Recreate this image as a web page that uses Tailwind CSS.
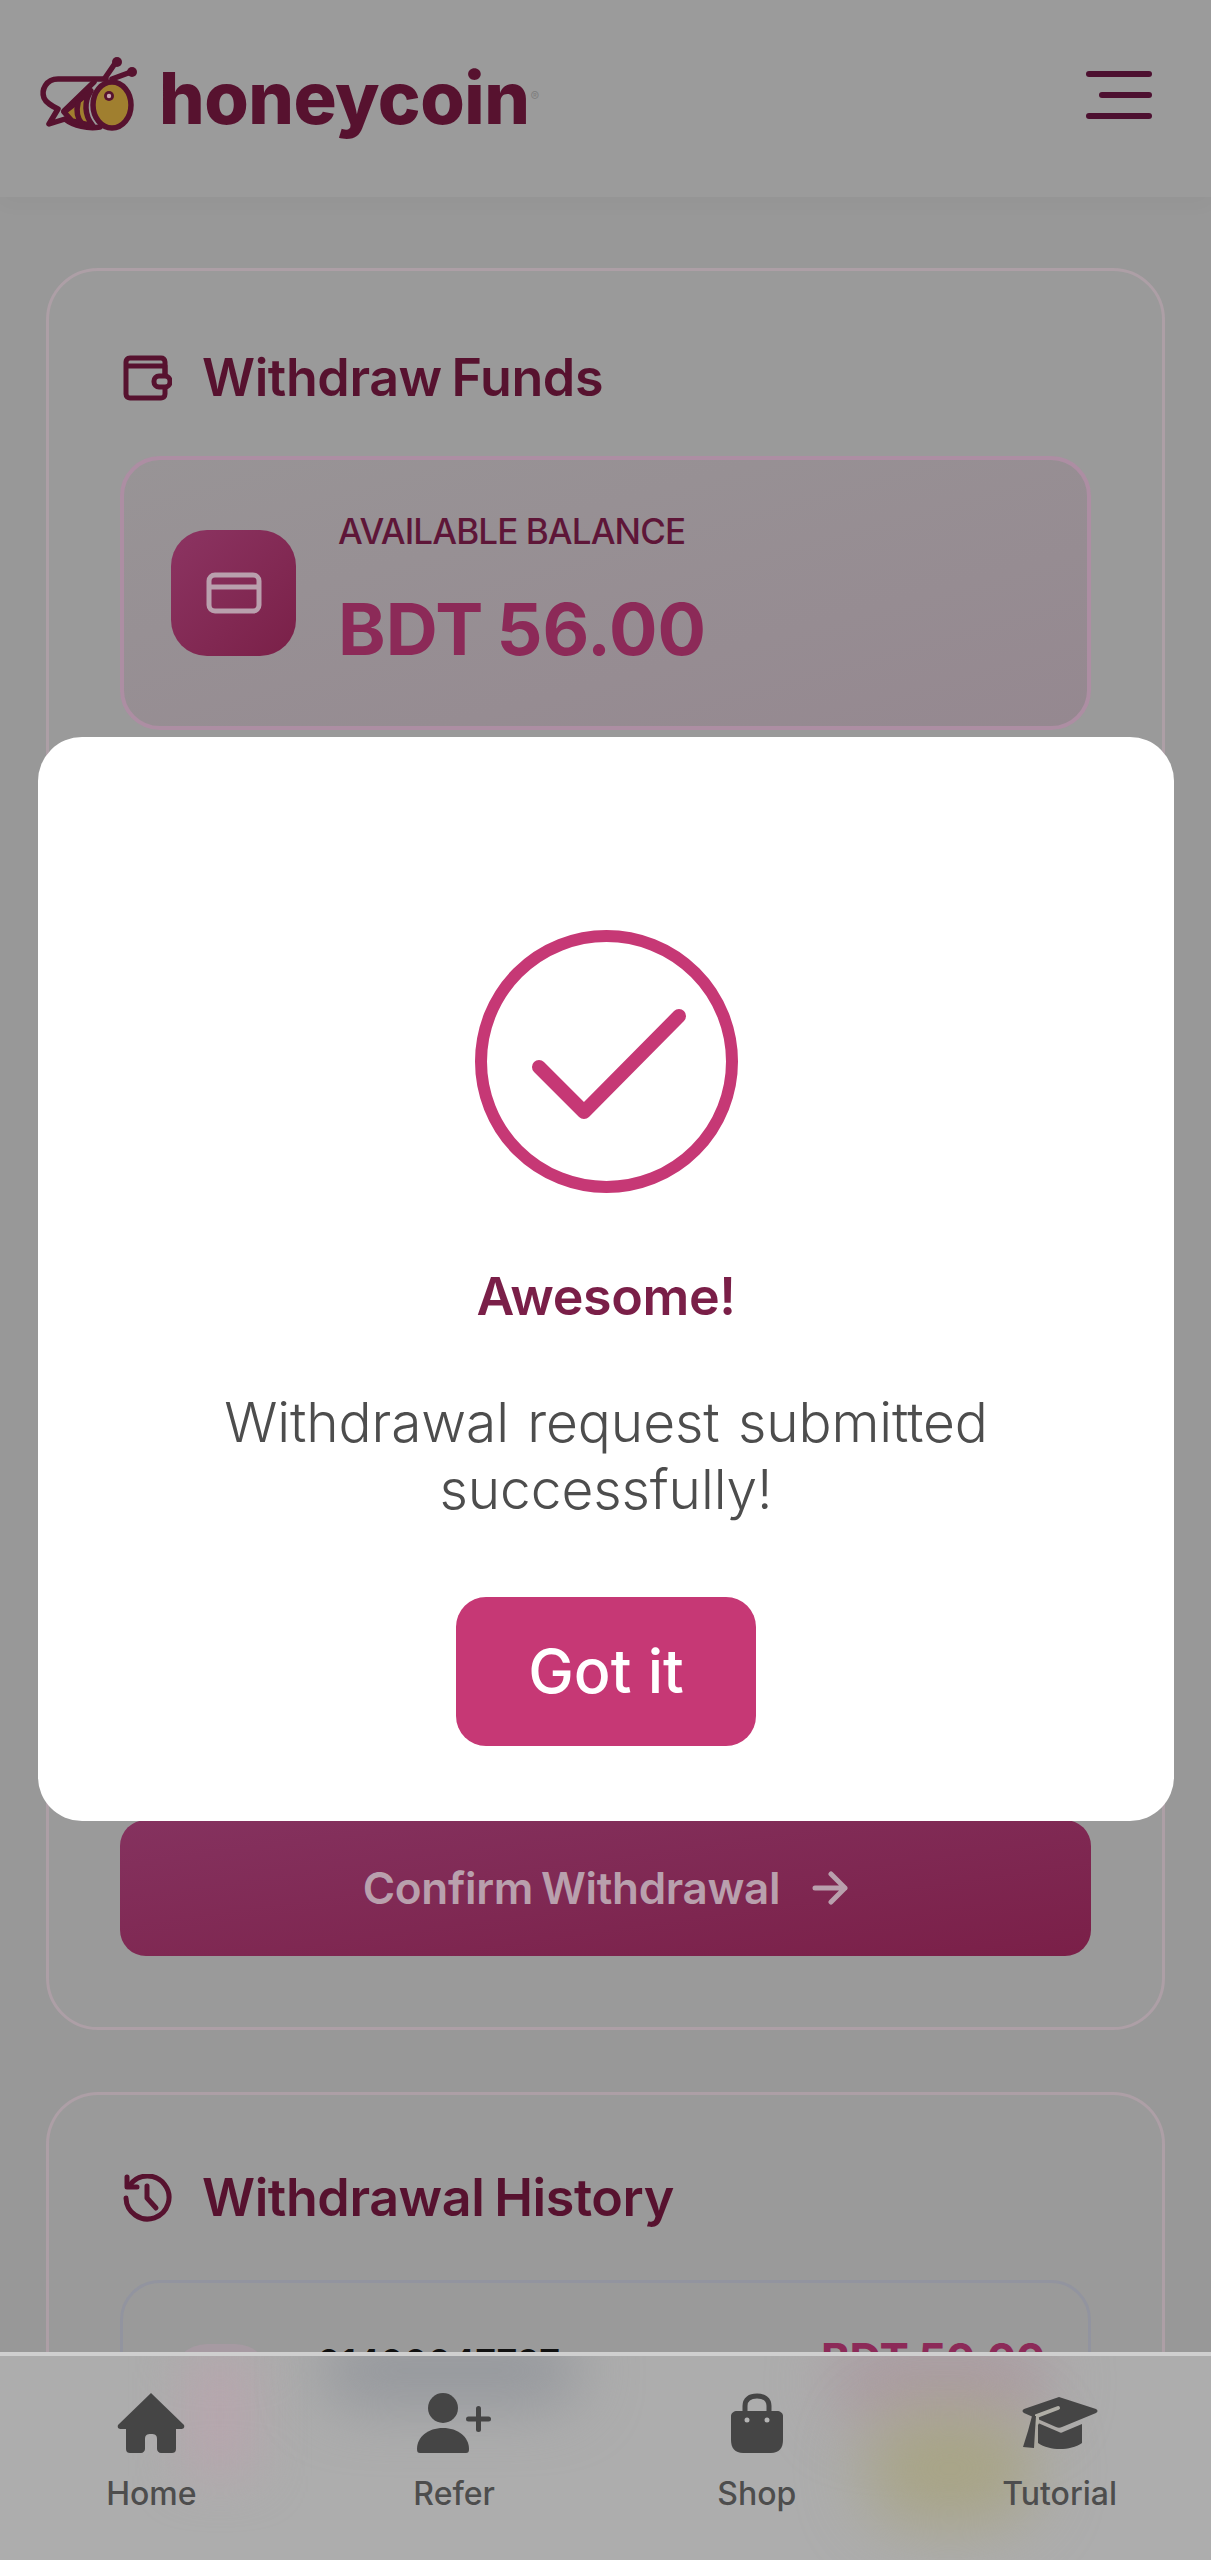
<!DOCTYPE html>
<html lang="en">
<head>
    <meta charset="UTF-8">
    <meta name="viewport" content="width=device-width, initial-scale=1.0">
    <title>Honeycoin - Withdraw</title>
    <script src="https://cdn.jsdelivr.net/npm/@tailwindcss/browser@4"></script>
</head>
<body class="relative h-[2560px] overflow-hidden bg-[#989898] font-['Inter',sans-serif]">
    <!-- Page behind the dialog, colours are the dimmed ones -->
    <header class="flex h-[197px] items-center justify-between bg-[#9b9b9b] pb-[8px] pl-[38px] pr-[59px] shadow-[0_6px_20px_rgba(0,0,0,0.03)]">
        <div class="flex items-center">
            <svg width="100" height="78" viewBox="38 57 100 78" fill="none" stroke="#57122f" stroke-width="5.500" stroke-linecap="round" stroke-linejoin="round">
                <path d="M106 80H58C46 80 41 91 44 99C46 104 52 107 58 110L49 125L65 120C74 127 88 130 100 128" />
                <path d="M94 83L64 112" />
                <ellipse cx="112" cy="106" rx="19" ry="23" fill="#a07f2f" />
                <path d="M91 92C84 102 84 116 93 127L72 122L64 113Z" fill="#a07f2f" />
                <path d="M78 104C76 112 78 120 82 125" />
                <circle cx="109" cy="97" r="5" fill="#57122f" stroke="none" />
                <circle cx="109" cy="97" r="2.2" fill="#c9a7b0" stroke="none" />
                <path d="M105 79L116 63M112 80L131 73" />
                <circle cx="117" cy="63" r="5" fill="#57122f" stroke="none" />
                <circle cx="132" cy="73" r="5" fill="#57122f" stroke="none" />
            </svg>
            <div class="mt-[6px] ml-[21px] text-[72px] leading-none font-extrabold tracking-[-0.5px] text-[#57122f]">honeycoin</div>
            <span class="-mb-[4px] ml-[1px] text-[13px] text-[#808080]">®</span>
        </div>
        <div class="flex flex-col items-end gap-[15px]">
            <span class="h-[6px] w-[66px] rounded-full bg-[#4d1030]"></span>
            <span class="h-[6px] w-[53px] rounded-full bg-[#4d1030]"></span>
            <span class="h-[6px] w-[66px] rounded-full bg-[#4d1030]"></span>
        </div>
    </header>

    <main class="flex flex-col gap-[62px] px-[46px] pt-[71px]">
        <section class="flex h-[1762px] flex-col rounded-[52px] border-[3px] border-[#ad9fa6] bg-[#9a9a9a] px-[71px] pt-[77px] pb-[71px]">
            <div class="flex h-[60px] items-center gap-[30px] pl-[3px]">
                <svg width="49" height="46" viewBox="0 0 49 46" fill="none" stroke="#57122f" stroke-width="5" stroke-linejoin="round">
                    <path d="M42 22V7C42 4 40 3 38 3H7C4 3 3 5 3 7V39C3 42 5 43 7 43H38C40 43 42 42 42 39V32" />
                    <path d="M3 11H42V20" />
                    <rect x="31" y="21" width="16" height="11" rx="5" />
                </svg>
                <h2 class="text-[52px] leading-none font-semibold tracking-[-0.4px] [word-spacing:-3px] text-[#57122f]">Withdraw Funds</h2>
            </div>
            <div class="mt-[48px] flex h-[274px] items-center gap-[42px] rounded-[40px] border-4 border-[#ad8ea3] bg-linear-to-br from-[#989496] to-[#958890] pl-[47px]">
                <div class="flex h-[126px] w-[125px] items-center justify-center rounded-[36px] bg-linear-to-br from-[#8c3462] to-[#7a2048]">
                    <svg width="56" height="42" viewBox="0 0 56 42" fill="none" stroke="#b9a0ad" stroke-width="5">
                        <rect x="3" y="3" width="50" height="36" rx="6" />
                        <path d="M3 15H53" />
                    </svg>
                </div>
                <div class="-mt-[6px] flex flex-col">
                    <p class="text-[35px] leading-[40px] font-medium tracking-[-0.9px] text-[#5e1638]">AVAILABLE BALANCE</p>
                    <p class="mt-[38px] text-[72px] leading-[80px] font-bold [word-spacing:-4px] text-[#8c2a58]">BDT 56.00</p>
                </div>
            </div>
            <button class="mt-auto flex h-[136px] items-center justify-center gap-[32px] rounded-[26px] bg-linear-to-br from-[#85325f] to-[#7a1f48] text-[44px] font-semibold tracking-[-0.3px] [word-spacing:-3px] text-[#b9a0ad]">
                Confirm Withdrawal
                <svg width="36" height="34" viewBox="0 0 36 34" fill="none" stroke="#b9a0ad" stroke-width="5" stroke-linecap="round" stroke-linejoin="round">
                    <path d="M3 17H33M19 3L33 17L19 31" />
                </svg>
            </button>
        </section>

        <!-- Cut off where the nav bar starts -->
        <section class="flex h-[262px] flex-col overflow-hidden rounded-t-[52px] border-x-[3px] border-t-[3px] border-[#ad9fa6] bg-[#9a9a9a] px-[71px] pt-[73px]">
            <div class="flex h-[60px] shrink-0 items-center gap-[30px] pl-[3px]">
                <svg width="49" height="48" viewBox="0 0 49 48" fill="none" stroke="#57122f" stroke-width="5" stroke-linecap="round" stroke-linejoin="round">
                    <path d="M7 11A21.500 21.500 0 1 1 3 24" />
                    <path d="M4 3V13H14" />
                    <path d="M24 12V24L33 34" />
                </svg>
                <h2 class="text-[52px] leading-none font-semibold tracking-[-0.4px] [word-spacing:-3px] text-[#57122f]">Withdrawal History</h2>
            </div>
            <div class="mt-[52px] flex h-[300px] shrink-0 items-start justify-between rounded-[40px] border-[3px] border-[#92949f] pt-[58px] pr-[43px] pl-[48px]">
                <div class="flex items-start gap-[46px]">
                    <div class="mt-[3px] h-[120px] w-[100px] rounded-[36px] bg-[#a69aa2]"></div>
                    <p class="mt-[1px] text-[36px] font-semibold leading-[40px] text-[#111]">01400047797</p>
                </div>
                <p class="-mt-[9px] text-[44px] leading-[54px] font-bold tracking-[-0.5px] text-[#8c2a58]">BDT 50.00</p>
            </div>
        </section>
    </main>

    <!-- Success dialog -->
    <div class="absolute top-[737px] left-[38px] flex h-[1084px] w-[1136px] flex-col items-center rounded-[44px] bg-white pt-[193px]">
        <svg width="263" height="263" viewBox="0 0 263 263" fill="none" stroke="#c63875" stroke-linecap="round" stroke-linejoin="round">
            <circle cx="131.500" cy="131.500" r="125.500" stroke-width="12" />
            <path d="M64 137L109 182L204 86" stroke-width="14" />
        </svg>
        <h3 class="mt-[74px] text-[52px] leading-[60px] font-semibold tracking-[-0.4px] text-[#7a1f48]">Awesome!</h3>
        <p class="mt-[62px] w-[860px] text-center text-[55px] leading-[67px] font-light tracking-[-0.1px] [word-spacing:3px] text-[#4d4d4d]">Withdrawal request submitted successfully!</p>
        <button class="mt-[74px] flex h-[149px] w-[300px] items-center justify-center rounded-[30px] bg-[#c63875] text-[61px] font-medium text-white">Got it</button>
    </div>

    <!-- Bottom navigation, frosted: the blobs stand for the history row blurred behind it -->
    <nav class="absolute right-0 bottom-0 left-0 grid h-[208px] grid-cols-4 overflow-hidden border-t-4 border-[#cfcfcf] bg-[#adadad]">
        <div class="absolute top-0 left-[185px] h-[120px] w-[70px] bg-[#b6a6ad] blur-[24px]"></div>
        <div class="absolute -top-[20px] left-[320px] h-[70px] w-[260px] rounded-full bg-[#94979c] blur-[30px]"></div>
        <div class="absolute -top-[20px] left-[830px] h-[90px] w-[220px] rounded-full bg-[#ab9ca2] blur-[30px]"></div>
        <div class="absolute top-[55px] left-[865px] h-[115px] w-[170px] rounded-full bg-[#a8a486] blur-[32px]"></div>
        <a class="relative flex flex-col items-center pt-[37px] text-[32px] leading-[40px] font-medium text-[#4d4d4d]">
            <svg width="68" height="60" viewBox="0 0 68 60" fill="#454545">
                <path d="M34 0L67 32C68 35 66 36 64 36H59V56C59 59 57 60 55 60H44C42 60 40 58 40 56V46C40 42 38 41 34 41C30 41 28 42 28 46V56C28 58 26 60 24 60H13C11 60 9 59 9 56V36H4C2 36 0 35 1 32Z" />
            </svg>
            <span class="mt-[21px]">Home</span>
        </a>
        <a class="relative flex flex-col items-center pt-[37px] text-[32px] leading-[40px] font-medium text-[#4d4d4d]">
            <svg width="74" height="60" viewBox="0 0 74 60" fill="#454545">
                <circle cx="26" cy="15" r="15" />
                <path d="M0 56C0 44 11 35 26 35C41 35 52 44 52 56C52 59 51 60 49 60H3C1 60 0 59 0 56Z" />
                <rect x="49" y="23.500" width="25" height="5" rx="2.500" />
                <rect x="59" y="13" width="5" height="26" rx="2.500" />
            </svg>
            <span class="mt-[21px]">Refer</span>
        </a>
        <a class="relative flex flex-col items-center pt-[37px] text-[32px] leading-[40px] font-medium text-[#4d4d4d]">
            <svg width="52" height="60" viewBox="0 0 52 60">
                <path d="M14 20V13C14 6 19 3 26 3C33 3 38 6 38 13V20" fill="none" stroke="#454545" stroke-width="5" />
                <path fill="#454545" d="M6 18H46C49 18 52 20 52 23V47C52 55 48 60 40 60H12C4 60 0 55 0 47V23C0 20 3 18 6 18Z" />
                <circle cx="16" cy="27" r="2.500" fill="#b4b4b4" />
                <circle cx="36" cy="27" r="2.500" fill="#b4b4b4" />
            </svg>
            <span class="mt-[21px]">Shop</span>
        </a>
        <a class="relative flex flex-col items-center pt-[37px] text-[32px] leading-[40px] font-medium text-[#4d4d4d]">
            <svg width="76" height="60" viewBox="0 0 76 60" fill="#454545">
                <path d="M37 4L74 16C76 17 76 19 74 20L40 34C38 35 36 35 34 34L2 20C0 19 0 17 2 16Z" />
                <path d="M16 30L37 39C38 40 40 40 41 39L60 31V50C48 58 28 58 16 50Z" />
                <path d="M36 15L15 23L15 30" fill="none" stroke="#b0aea6" stroke-width="4" stroke-linecap="round" />
                <path d="M10 23H14L13 38L12 55L1 54L6 38Z" />
            </svg>
            <span class="mt-[21px]">Tutorial</span>
        </a>
    </nav>
</body>
</html>
